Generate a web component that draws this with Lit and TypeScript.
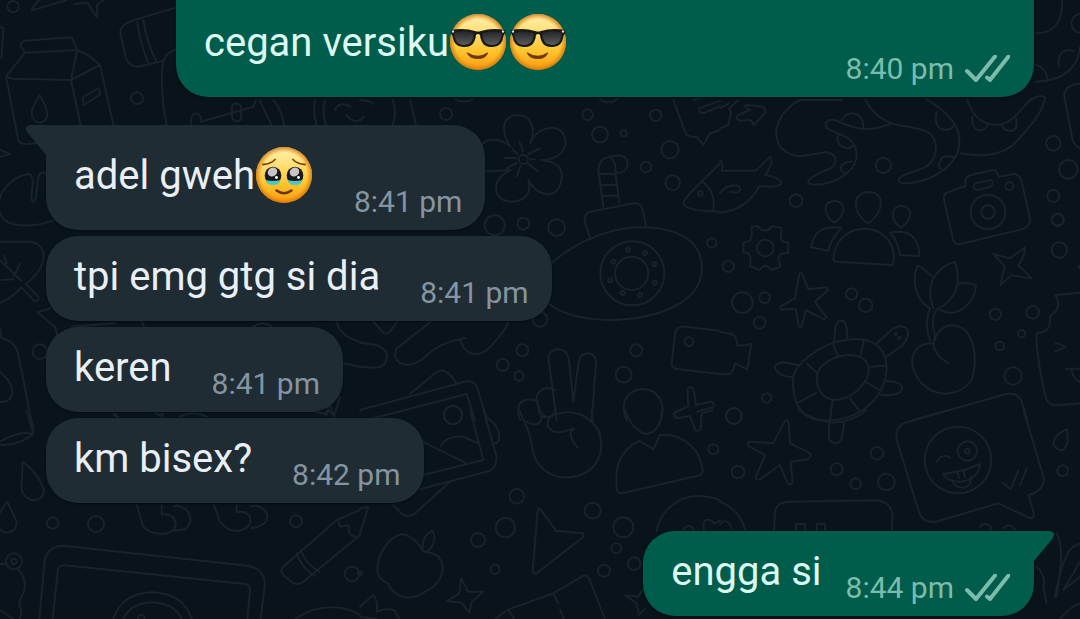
import { LitElement, html, svg, css, nothing } from "lit";
import { customElement, property } from "lit/decorators.js";

type Face = "cool" | "touched";
interface Message {
  text: string;
  faces?: Face[];
  time: string;
  out?: boolean;
  tail?: boolean;
  wide?: boolean;
  last?: boolean;
}

const MESSAGES: Message[] = [
  { text: "cegan versiku", faces: ["cool", "cool"], time: "8:40 pm", out: true, wide: true, last: true },
  { text: "adel gweh", faces: ["touched"], time: "8:41 pm", tail: true },
  { text: "tpi emg gtg si dia", time: "8:41 pm" },
  { text: "keren", time: "8:41 pm" },
  { text: "km bisex?", time: "8:42 pm", last: true },
  { text: "engga si", time: "8:44 pm", out: true, tail: true },
];

// Wallpaper tiles, drawn on a grid three times finer than the page.
interface Tile { x: number; y: number; lines: string[]; rings: number[][]; }

const TILES: Tile[] = [
  {
    x: 0, y: 0,
    lines: [
      "M95 30Q105 8 130 -10M100 30L200 0M222 12L262 8L290 52L292 12L312 0",
      "M0 82L10 84L4 175M75 158L62 140Q62 124 75 122L215 112L232 150L75 158L18 230L55 420Q60 432 75 432L110 430M18 230L40 236L213 240L300 195L340 375M232 150L213 240L242 375M232 150Q270 165 300 195",
      "M119 285Q90 330 96 348Q104 368 119 368Q138 366 142 345Q142 325 119 285ZM248 292L296 264L301 283L252 315Z",
      "M528 22L390 64Q355 80 362 105L378 175Q388 200 415 200L486 184M412 66Q420 130 446 192M430 60Q440 130 470 184",
      "M528 148Q490 160 487 200Q482 290 500 375M575 375Q568 345 588 340Q605 345 603 365L760 320L768 300M697 340Q690 312 710 310Q728 315 722 332Q730 365 710 364Q692 360 697 340M778 300L815 375M820 300Q845 330 853 375M945 300Q938 340 950 375M975 300Q965 340 978 375",
      "M0 450L30 462L0 470M136 520C100 500 120 600 100 605C82 600 115 530 85 522Q35 530 5 580Q-20 640 25 668Q80 688 160 662",
      "M1005 330Q1020 300 1050 320M1040 345Q1055 370 1080 360",
    ],
    rings: [[39, 20, 17], [411, 295, 18]],
  },
  {
    x: 360, y: 0,
    lines: [
      "M0 300Q30 300 38 312M0 362L12 350M98 300Q112 340 98 375M150 300L168 375M285 296Q312 315 340 296M720 296Q745 318 772 296",
      "M452 440C430 410 415 350 470 346C525 344 525 400 510 430C530 385 590 365 612 405C630 450 590 480 545 480C590 485 615 505 602 550C590 595 535 595 505 540C520 590 480 610 440 603C400 595 390 540 452 510C420 510 395 518 378 512M370 430C390 410 430 420 452 440",
      "M490 455L478 425M505 462L540 445M512 478L525 478M503 490L535 514M482 498L470 530M470 489L440 505M468 474L436 474M472 462L458 448",
      "M730 620L716 520Q712 475 750 470L775 466Q800 468 803 490Q802 515 780 518L766 516L778 608M750 470Q770 490 766 516M718 522L766 522M722 556L770 554M727 588L775 586",
      "M692 718L674 665Q670 645 690 635L820 610Q846 608 850 635L858 680",
      "M940 300L975 395Q985 415 1010 410L1030 435L1048 402L1080 390M1000 300L1080 275M1018 325L1080 302M1018 325Q1015 342 1035 338L1080 318",
      "M1080 490L1000 570Q965 605 972 615Q985 632 1080 635M1028 545C1060 570 1065 600 1060 632",
    ],
    rings: [[258, 342, 18], [490, 478, 14], [683, 344, 16], [720, 404, 24], [791, 400, 9], [887, 346, 17], [930, 449, 26], [858, 501, 16], [938, 548, 22], [1021, 580, 7], [404, 676, 30], [490, 671, 18], [590, 683, 25]],
  },
  {
    x: 720, y: 0,
    lines: [
      "M0 324L28 310M0 385L25 375L30 350Q38 340 28 325L55 300M82 315L130 320L138 335L102 375L92 360L60 362Q40 355 55 345L90 330L72 318Z",
      "M240 300Q180 330 168 395C170 450 210 475 260 466L320 456C360 465 350 500 320 510C290 520 250 545 270 552C320 560 400 530 410 470Q412 430 380 412L345 396C305 385 310 355 345 360C400 385 440 400 510 372M240 300L365 300M436 298Q460 350 520 372L600 388C660 400 660 470 620 500L545 528Q525 545 550 550C640 550 715 490 718 430Q725 360 620 298",
      "M365 360Q385 330 415 345Q432 360 430 388M355 402Q345 430 370 442Q395 448 402 435M395 485Q365 485 362 505Q365 520 380 518M650 335Q640 375 665 388Q690 392 702 378M700 472Q665 460 658 490Q655 500 662 506M742 300Q760 355 800 370Q830 380 860 368Q890 350 925 305Q960 280 975 292C970 340 920 390 885 430Q830 480 722 460M757 350Q755 390 780 391Q800 390 802 372M845 372Q850 395 875 393Q895 388 888 355",
      "M948 100Q1030 100 1026 0M948 245Q1070 240 1080 140M948 195Q975 200 982 235M1016 200Q1010 150 1050 150L1062 155M1080 252Q1040 250 1032 285L1058 420Q1065 440 1080 445",
      "M675 580L736 558V540Q740 528 755 525L818 510Q832 510 835 530L882 522Q900 525 905 545L930 655Q932 680 905 688L720 732Q702 735 698 715L672 600Q670 585 680 578M765 550L812 540Q825 550 812 560L770 570Q755 562 765 550Z",
      "M0 480Q12 490 5 512L108 512L150 470Q165 485 135 525Q175 530 185 548Q175 565 118 558Q80 630 0 638M0 580Q20 550 55 558Q68 570 50 578L30 575",
      "M445 576C500 576 490 640 445 670C395 640 395 580 445 576ZM343 602C380 604 378 645 343 668C310 645 306 605 343 602ZM545 617C580 620 578 660 543 683C510 660 510 620 545 617Z",
    ],
    rings: [[490, 496, 23], [228, 602, 19], [1000, 430, 22], [1045, 508, 28], [1000, 588, 18], [1013, 658, 18], [804, 636, 52], [804, 636, 20], [868, 559, 12], [1082, 70, 28]],
  },
  {
    x: 0, y: 230,
    lines: [
      "M0 35H90Q130 40 130 80Q130 120 78 162L115 200Q118 215 102 212L64 172Q35 205 0 218M0 90L64 152M12 75L20 100M60 100L42 138M5 150L40 148",
      "M150 235L112 247L165 290L172 315M0 295L5 325Q48 335 55 375L100 600M0 425Q40 460 38 490Q30 520 0 515M215 290L345 280M425 275L432 290M760 290Q790 270 815 290M1010 275Q1020 320 1080 335M1030 400L1080 410",
      "M345 550Q350 565 355 560M465 550Q480 530 485 560M540 560Q580 540 620 560M940 545L975 550L990 525L1000 555",
      "M1020 500L1005 550",
    ],
    rings: [[120, 365, 22]],
  },
  {
    x: 360, y: 220,
    lines: [
      "M575 130Q650 60 760 32C870 5 1030 25 1026 150C1020 250 890 300 740 300Q620 295 568 252",
      "M40 305L70 338Q80 345 90 335L112 305M212 305L110 385Q95 420 130 433Q160 440 190 415Q240 365 318 354M302 358C310 400 345 415 380 390Q425 350 445 308M0 368L45 374Q85 385 80 415Q75 445 40 443L0 440",
      "M590 600L566 420Q562 390 597 388Q620 390 626 415L640 545L656 425Q660 400 688 400Q710 405 708 430L695 600M586 510Q560 495 538 515Q520 535 540 570L555 590M535 545Q500 530 480 550Q470 565 480 600",
      "M0 570L320 484Q345 482 352 505L382 600M150 522L225 460Q250 440 275 470L290 490M40 595L320 522L345 600",
      "M982 505Q998 495 1002 515L1008 555L1052 545Q1068 550 1058 562L1012 575M982 505L985 560L945 575Q935 585 950 590",
      "M1080 332L975 320Q950 318 945 340L935 430Q935 445 955 448L1080 462",
      "M800 600Q780 555 805 525Q840 495 880 515Q920 545 902 600",
    ],
    rings: [[817, 160, 96], [815, 160, 50], [804, 89, 6], [855, 100, 6], [883, 132, 6], [884, 188, 6], [840, 226, 6], [788, 219, 6], [751, 181, 6], [760, 125, 6], [1055, 69, 14], [540, 298, 22], [487, 391, 18], [428, 435, 18], [477, 468, 14], [829, 391, 18], [791, 464, 24], [987, 365, 13], [279, 585, 27]],
  },
  {
    x: 720, y: 220,
    lines: [
      "M95 22L112 18Q135 45 158 18L185 25L182 55L190 65L205 68V98L182 102L175 115L182 140L155 150Q135 125 118 150L90 138L92 110L82 98L70 96V68L90 62L95 48Z",
      "M365 24Q285 10 273 82L325 92Q330 60 365 24ZM340 120C345 -5 525 -5 522 120L518 135L345 125ZM510 38Q595 20 598 108L540 106Q535 65 510 38Z",
      "M238 162Q245 155 250 170L265 208L318 202Q330 208 315 218L285 245L320 292Q315 300 305 295L258 270L245 318Q238 325 235 312L228 268L185 268Q172 262 190 255L225 235Z",
      "M635 168Q600 135 592 138C575 180 585 240 630 265M640 265C615 200 640 145 705 125C725 190 710 240 650 268M712 192Q740 185 768 195C765 250 710 300 658 268M630 265Q612 310 630 362M650 268Q630 300 645 345M640 372C655 310 700 305 735 330C770 370 770 430 755 480C720 530 650 535 605 490C570 450 565 405 600 378Q625 365 640 372Q640 400 685 430M645 345L642 370",
      "M342 368L346 320Q355 295 372 305Q382 315 382 355M468 372L520 325Q550 310 563 330Q570 350 545 378L500 410M235 436L190 426Q155 435 168 450Q180 470 218 472M500 484Q545 485 546 505Q545 530 480 524",
      "M218 480C220 430 300 380 350 365C430 345 500 360 500 450C490 550 400 610 300 600C240 595 220 550 218 480ZM290 475C290 430 350 405 390 405C440 405 450 440 445 460C435 500 390 540 340 540C310 535 290 510 290 475ZM340 375L355 412M432 360L422 405M452 440L498 437M436 485L480 510M390 535L420 575M338 540L330 600M235 548L290 518M260 430L292 460",
      "M820 102L870 115L915 82Q915 110 895 135L935 175Q900 172 875 165L842 195Q845 165 855 140Z",
      "M0 336L35 342Q50 345 52 378L94 372L82 448L45 430Q40 465 20 463L0 462",
      "M1080 218L1005 225Q1030 260 990 290Q995 340 950 338C948 400 965 480 978 535Q985 555 1010 556L1080 550M1005 368L1038 380L1005 395M1038 446H1080M1055 448Q1060 480 1080 485",
      "M580 600L860 522Q895 518 905 545L922 600",
    ],
    rings: [[136, 84, 25], [25, 139, 17], [67, 248, 31], [134, 233, 16], [119, 308, 18], [395, 222, 17], [437, 256, 20], [826, 283, 17], [938, 277, 19], [905, 341, 11], [839, 378, 13], [879, 468, 26], [1018, 90, 23], [1013, 0, 18], [140, 534, 14], [41, 588, 24], [527, 342, 3], [538, 353, 3], [1080, 140, 4]],
  },
  {
    x: 0, y: 410,
    lines: [
      "M80 0L100 72Q50 110 0 104M96 72Q60 60 0 95",
      "M68 155Q115 190 132 240Q130 270 98 271Q70 265 64 235ZM22 275Q-15 320 -5 350Q5 368 25 368Q50 362 50 335Z",
      "M410 285L428 345Q440 370 490 372Q530 368 527 335Q515 308 485 314V285M523 290Q530 280 560 300Q585 330 555 358L525 362M642 285L660 335Q685 368 720 362Q760 350 750 320Q735 300 710 307V285M752 290Q780 280 800 310Q810 345 755 355",
      "M118 627L134 450Q145 408 190 407L730 466Q790 470 795 520L782 627M158 627L174 475Q180 465 195 466L735 522Q750 525 750 540L742 627M340 627Q365 550 455 547Q550 550 575 627M370 627Q390 580 455 577Q525 580 545 627",
      "M850 470L1010 330L1080 300M850 470Q838 480 850 495L880 520Q900 525 910 515L1080 375M890 430Q905 475 945 498M902 420Q920 465 958 485M1015 330L1020 350L1045 345L1048 370L1070 385",
      "M0 462H20M52 475Q85 510 70 550Q50 580 65 600L60 627M0 600L40 627M885 627Q940 590 1000 592Q1040 592 1080 615",
      "M340 10Q345 25 350 10M470 10Q485 25 490 10M950 5L980 15L985 0L1005 18",
    ],
    rings: [[158, 339, 17], [288, 342, 24], [888, 334, 18], [1056, 492, 22], [42, 454, 24], [42, 454, 8], [424, 625, 10]],
  },
  {
    x: 360, y: 410,
    lines: [
      "M330 0L370 150L190 195M370 0L410 140Q410 170 390 182L180 238M188 95L315 158M242 108Q260 75 310 80L355 100M385 25Q420 50 418 85Q415 98 405 100M100 285L125 312Q145 325 165 310L270 215",
      "M0 295L25 292L0 370M190 425Q165 380 130 373C90 375 50 430 52 485Q58 510 85 520C100 565 155 575 195 545C250 520 260 470 235 440Q215 425 190 425ZM190 425Q180 380 218 362C232 390 215 420 195 425",
      "M540 296L588 362L668 370Q675 375 665 385L530 490Q518 495 518 482L533 305Q533 292 540 296Z",
      "M478 0L495 40Q508 60 520 130C535 185 590 210 640 200C710 190 730 130 722 85Q715 40 660 12C615 0 550 10 565 50C580 75 605 68 642 55C620 75 640 95 652 112M500 35Q535 55 545 25L535 0M545 20Q580 25 588 0M695 0L698 38",
      "M795 0Q810 50 850 70Q870 75 885 60Q908 35 905 0M838 92L880 118L900 75C970 70 1025 120 1028 185Q1025 195 1010 198L785 250Q770 250 770 235C765 170 775 125 838 92Z",
      "M1058 0L1025 10L1022 58Q1015 68 1005 58L990 18L950 25Q935 15 950 5L965 0",
      "M303 505L325 545L370 545L335 575L328 608L305 578L260 574L298 550Z",
      "M795 556L835 560L848 540M800 560L828 578L838 615L855 595M405 627L445 598L580 550L670 497Q685 495 690 512L735 627M445 598L462 627M580 550L595 580M600 600L612 627",
      "M0 590L40 555Q55 575 50 605Q80 590 105 602L118 627M0 620L50 627",
      "M890 362C900 305 950 260 1010 258Q1050 258 1080 270M970 360Q985 335 1002 360M1032 360Q1025 325 1050 330L1065 340L1080 332",
    ],
    rings: [[279, 15, 28], [470, 259, 22], [436, 353, 29], [354, 390, 21], [405, 478, 14], [698, 302, 24], [790, 352, 30], [769, 415, 15], [822, 461, 19], [732, 482, 18], [1060, 118, 15], [0, 490, 6]],
  },
  {
    x: 720, y: 410,
    lines: [
      "M195 32Q205 28 206 45L210 100L268 128Q278 140 262 148L212 155L218 215Q210 230 202 218L180 165L120 208Q100 210 110 195L135 135L85 108Q78 92 98 95L160 100Z",
      "M235 0Q290 35 340 38Q400 35 440 0M328 38L326 80Q328 100 345 100Q360 98 365 85L373 35M0 275Q60 300 75 358M0 342Q25 320 35 358",
      "M162 360L165 305Q170 275 210 275L470 271Q515 275 518 320L515 360M228 360V342H255V360M290 360V342H315V360",
      "M690 0L555 38Q525 50 530 90L595 300Q605 340 645 336L835 280L930 325Q942 325 942 310L925 255Q970 245 972 205L910 0M650 155Q665 130 690 142M668 192Q730 185 780 162Q775 210 720 215Q685 215 668 192ZM695 210Q705 235 735 233Q755 225 752 200M712 188L718 205M730 183L735 202M848 218L872 237L895 182M900 225L920 176",
      "M1040 58Q1000 75 1000 100Q1010 122 1028 120Q1050 105 1040 58ZM780 350Q785 340 798 342Q815 345 812 360M850 355Q870 335 885 360",
      "M1010 370Q1030 410 1020 480L1010 560M1060 410Q1030 430 1005 560M1080 400L1060 410M1080 455L1030 540L1080 500M1020 627Q1050 590 1080 580M950 470Q980 500 970 530L980 580",
    ],
    rings: [[714, 150, 100], [742, 123, 29], [742, 123, 7], [42, 18, 24], [54, 186, 19], [350, 178, 18], [407, 221, 16], [471, 130, 19], [499, 216, 25], [1028, 182, 16]],
  },
];

@customElement("chat-wallpaper")
class ChatWallpaper extends LitElement {
  static styles = css`
    :host { display: block; }
    svg { display: block; width: 100%; height: 100%; fill: none; stroke: #172328; stroke-width: 6; stroke-linecap: round; stroke-linejoin: round; }
  `;
  render() {
    return html`<svg viewBox="0 0 1080 619" preserveAspectRatio="xMinYMin slice" aria-hidden="true">
      ${TILES.map((t) => svg`<g transform="translate(${t.x} ${t.y}) scale(.33333)">
        ${t.lines.map((d) => svg`<path d=${d} />`)}
        ${t.rings.map(([x, y, r]) => svg`<circle cx=${x} cy=${y} r=${r} />`)}
      </g>`)}
    </svg>`;
  }
}

@customElement("face-emoji")
class FaceEmoji extends LitElement {
  @property() kind: Face = "cool";
  static styles = css`
    :host { display: inline-block; width: 56px; height: 56px; margin: 0 2px 0 1px; vertical-align: -14px; line-height: 0; }
    :host(:not(:last-child)) { margin-right: 3px; }
    svg { display: block; width: 100%; height: 100%; }
  `;
  private cool() {
    return svg`
      <path d="M17.500 38.500Q28 45 37.500 38.500Q38.500 38 38 39.500Q35 45 28 45Q20 45 17 39.500Q16.500 38 17.500 38.500Z" fill="#6b3a05" />
      <path d="M1 16Q14 13.500 25 17Q28 18 31 17Q42 13.500 55 16L55.500 19Q54 20 53.500 22Q52 33 43 33Q34 33.500 31.500 27Q30 23 30 21Q28 19 26 21Q26 23 24.500 27Q22 33.500 13 33Q4 33 2.500 22Q2 20 0.500 19Z" fill="#17191b" />
      <path d="M4 19Q14 15.500 23.500 19.500Q23.500 31 13 31Q5 30.500 4 19ZM32.500 19.500Q42 15.500 52 19Q51 30.500 43 31Q32.500 31 32.500 19.500Z" fill="url(#glass)" />
      <circle cx="3" cy="17.500" r="1.200" fill="#d5d8d9" /><circle cx="53" cy="17.500" r="1.200" fill="#d5d8d9" />`;
  }
  private touched() {
    return svg`
      <path d="M7 17.500Q15 17 19 12.500M37 12.500Q41 17 49 17.500" fill="none" stroke="#74480c" stroke-width="1.800" stroke-linecap="round" />
      <ellipse cx="17" cy="28.500" rx="8.300" ry="8.800" fill="#15181c" /><ellipse cx="39" cy="28.500" rx="8.300" ry="8.800" fill="#15181c" />
      <path d="M9.500 33Q17 35 24.500 33Q23.500 38 17 38Q10.500 38 9.500 33ZM31.500 33Q39 35 46.500 33Q45.500 38 39 38Q32.500 38 31.500 33Z" fill="#4cc9c4" />
      <ellipse cx="16.500" cy="25" rx="5" ry="4.300" transform="rotate(-35 16.500 25)" fill="#c9c4c6" />
      <ellipse cx="38.500" cy="25" rx="5" ry="4.300" transform="rotate(-35 38.500 25)" fill="#c9c4c6" />
      <circle cx="20.500" cy="30.500" r="1.400" fill="#fff" /><circle cx="42.500" cy="30.500" r="1.400" fill="#fff" />
      <path d="M20.500 43.500Q28 49 35.500 43.500" fill="none" stroke="#663704" stroke-width="2.400" stroke-linecap="round" />`;
  }
  render() {
    const label = this.kind === "cool" ? "smiling face with sunglasses" : "face holding back tears";
    return html`<svg viewBox="0 0 56 56" role="img" aria-label=${label}>
      <defs>
        <linearGradient id="skin" x2="0" y2="1">
          <stop offset="0" stop-color="#fff0b0" /><stop offset=".3" stop-color="#ffe17a" />
          <stop offset=".65" stop-color="#fec62f" /><stop offset="1" stop-color="#fb9a12" />
        </linearGradient>
        <radialGradient id="rim"><stop offset=".8" stop-color="#e98b0c" stop-opacity="0" /><stop offset="1" stop-color="#cf7107" stop-opacity=".85" /></radialGradient>
        <linearGradient id="glass" x2="0" y2="1"><stop offset="0" stop-color="#222426" /><stop offset="1" stop-color="#5a5c5e" /></linearGradient>
      </defs>
      <circle cx="28" cy="28" r="28" fill="url(#skin)" /><circle cx="28" cy="28" r="28" fill="url(#rim)" />
      ${this.kind === "cool" ? this.cool() : this.touched()}
    </svg>`;
  }
}

@customElement("app-root")
class AppRoot extends LitElement {
  static styles = css`
    :host { display: block; position: relative; min-height: 100vh; overflow: hidden; background: #08131a; font-family: Roboto, "Noto Sans", sans-serif; }
    .wallpaper { position: absolute; inset: 0; }
    .thread { position: relative; display: flex; flex-direction: column; align-items: flex-start; gap: 6px; list-style: none; margin: -8px 0 0; padding: 0 46px 3px; }
    .bubble { position: relative; display: flex; align-items: flex-end; justify-content: space-between; gap: 40px; box-sizing: border-box; padding: 17px 23px 10px 28px; border-radius: 32px; background: #1f2c33; color: #e9eff5; box-shadow: 0 1px 2px #00000066; }
    .out { align-self: flex-end; gap: 24px; padding-right: 24px; background: #005d4b; color: #dcf8f1; }
    .wide { width: calc(100% - 130px); border-top-left-radius: 0; border-top-right-radius: 0; }
    .last { margin-bottom: 22px; }
    .tail-in { border-top-left-radius: 0; }
    .tail-out { border-top-right-radius: 0; }
    .tail { position: absolute; top: 0; width: 20px; height: 32px; }
    .tail-in .tail { right: 100%; fill: #1f2c33; }
    .tail-out .tail { left: 100%; fill: #005d4b; }
    .text { margin: 0; padding-bottom: 10px; font-size: 40px; line-height: 48px; }
    .faces { line-height: 68px; }
    .meta { display: flex; align-items: center; gap: 11px; font-size: 30px; line-height: 36px; color: #8594a0; white-space: nowrap; }
    .out .meta { color: #7dbcac; }
    .ticks { width: 45px; height: 28px; fill: none; stroke: currentColor; stroke-width: 4; stroke-linejoin: round; stroke-linecap: round; }
  `;

  private bubble(m: Message) {
    const tailClass = m.tail ? (m.out ? "tail-out" : "tail-in") : "";
    const d = m.out
      ? "M0 0H16Q22 1 19 7L0 30Z"
      : "M20 0H4Q-2 1 1 7L20 30Z";
    return html`<li class="bubble ${m.out ? "out" : ""} ${m.wide ? "wide" : ""} ${m.last ? "last" : ""} ${tailClass}">
      ${m.tail ? html`<svg class="tail" viewBox="0 0 20 32" aria-hidden="true"><path d=${d} /></svg>` : nothing}
      <p class="text ${m.faces ? "faces" : ""}">${m.text}${m.faces?.map((f) => html`<face-emoji kind=${f}></face-emoji>`)}</p>
      <span class="meta"><time>${m.time}</time>${m.out
        ? html`<svg class="ticks" viewBox="0 0 45 28" role="img" aria-label="Delivered"><path d="M2 16L11 25L30 1.500M22 22.500L25 25L43.500 1.500" /></svg>`
        : nothing}</span>
    </li>`;
  }

  render() {
    return html`<chat-wallpaper class="wallpaper"></chat-wallpaper>
      <ol class="thread">${MESSAGES.map((m) => this.bubble(m))}</ol>`;
  }
}
